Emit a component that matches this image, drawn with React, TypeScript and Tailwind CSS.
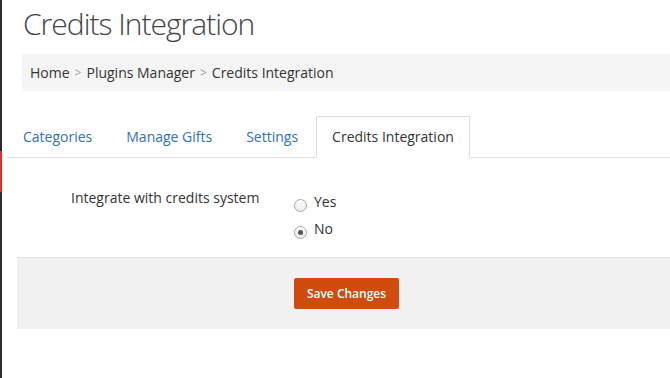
import React from "react";

function Radio({ checked }: { checked?: boolean }) {
  return (
    <span className="mt-[7px] flex h-[13px] w-[13px] shrink-0 items-center justify-center rounded-full border border-[#a9a9a9] bg-gradient-to-b from-white to-[#ececec]">
      {checked && <span className="h-[5px] w-[5px] rounded-full bg-[#555]" />}
    </span>
  );
}

export default function App() {
  const tabs = ["Categories", "Manage Gifts", "Settings"];
  return (
    <div
      className="flex h-[378px] w-[670px] overflow-hidden bg-white text-[14px] text-[#333]"
      style={{ fontFamily: '"Open Sans", "Liberation Sans", sans-serif' }}
    >
      <div className="flex w-[2px] shrink-0 flex-col bg-[#2b2b2b]">
        <div className="h-[151px]" />
        <div className="h-[41px] bg-[#d9302a]" />
      </div>
      <div className="flex min-w-0 flex-1 flex-col">
        <h1 className="ml-[21px] mt-[3px] text-[30px] leading-[41px] font-light tracking-[-1px] text-[#444]">
          Credits Integration
        </h1>
        <div className="ml-[20px] mt-[10px] flex h-[37px] items-center bg-[#f5f5f5] pl-[8px] leading-5 text-[#333]">
          <span>Home</span>
          <span className="px-[5px] text-[12px] text-[#999]">&gt;</span>
          <span>Plugins Manager</span>
          <span className="px-[5px] text-[12px] text-[#999]">&gt;</span>
          <span>Credits Integration</span>
        </div>
        <div className="ml-[5px] mt-[25px] flex border-b border-[#ddd]">
          {tabs.map((t) => (
            <div
              key={t}
              className="-mb-px mr-[2px] border border-transparent px-[15px] py-[10px] leading-5 text-[#3270b8]"
            >
              {t}
            </div>
          ))}
          <div className="-mb-px border border-[#ddd] border-b-white bg-white px-[15px] py-[10px] leading-5 text-[#333]">
            Credits Integration
          </div>
        </div>
        <div className="mt-[30px] flex">
          <div className="w-[292px] shrink-0 pl-[69px] leading-5 text-[#333]">
            Integrate with credits system
          </div>
          <div className="mt-[4px] flex flex-col">
            <div className="flex h-[27px] items-start gap-[7px]">
              <Radio />
              <span className="leading-5">Yes</span>
            </div>
            <div className="flex h-[27px] items-start gap-[7px]">
              <Radio checked />
              <span className="leading-5">No</span>
            </div>
          </div>
        </div>
        <div className="ml-[15px] mt-[11px] flex h-[72px] items-center border-t border-[#dedede] bg-[#f1f1f1] pl-[277px]">
          <button className="h-[31px] w-[105px] rounded-[2px] bg-[#d04b0e] text-[12px] font-semibold text-white">
            Save Changes
          </button>
        </div>
      </div>
    </div>
  );
}
